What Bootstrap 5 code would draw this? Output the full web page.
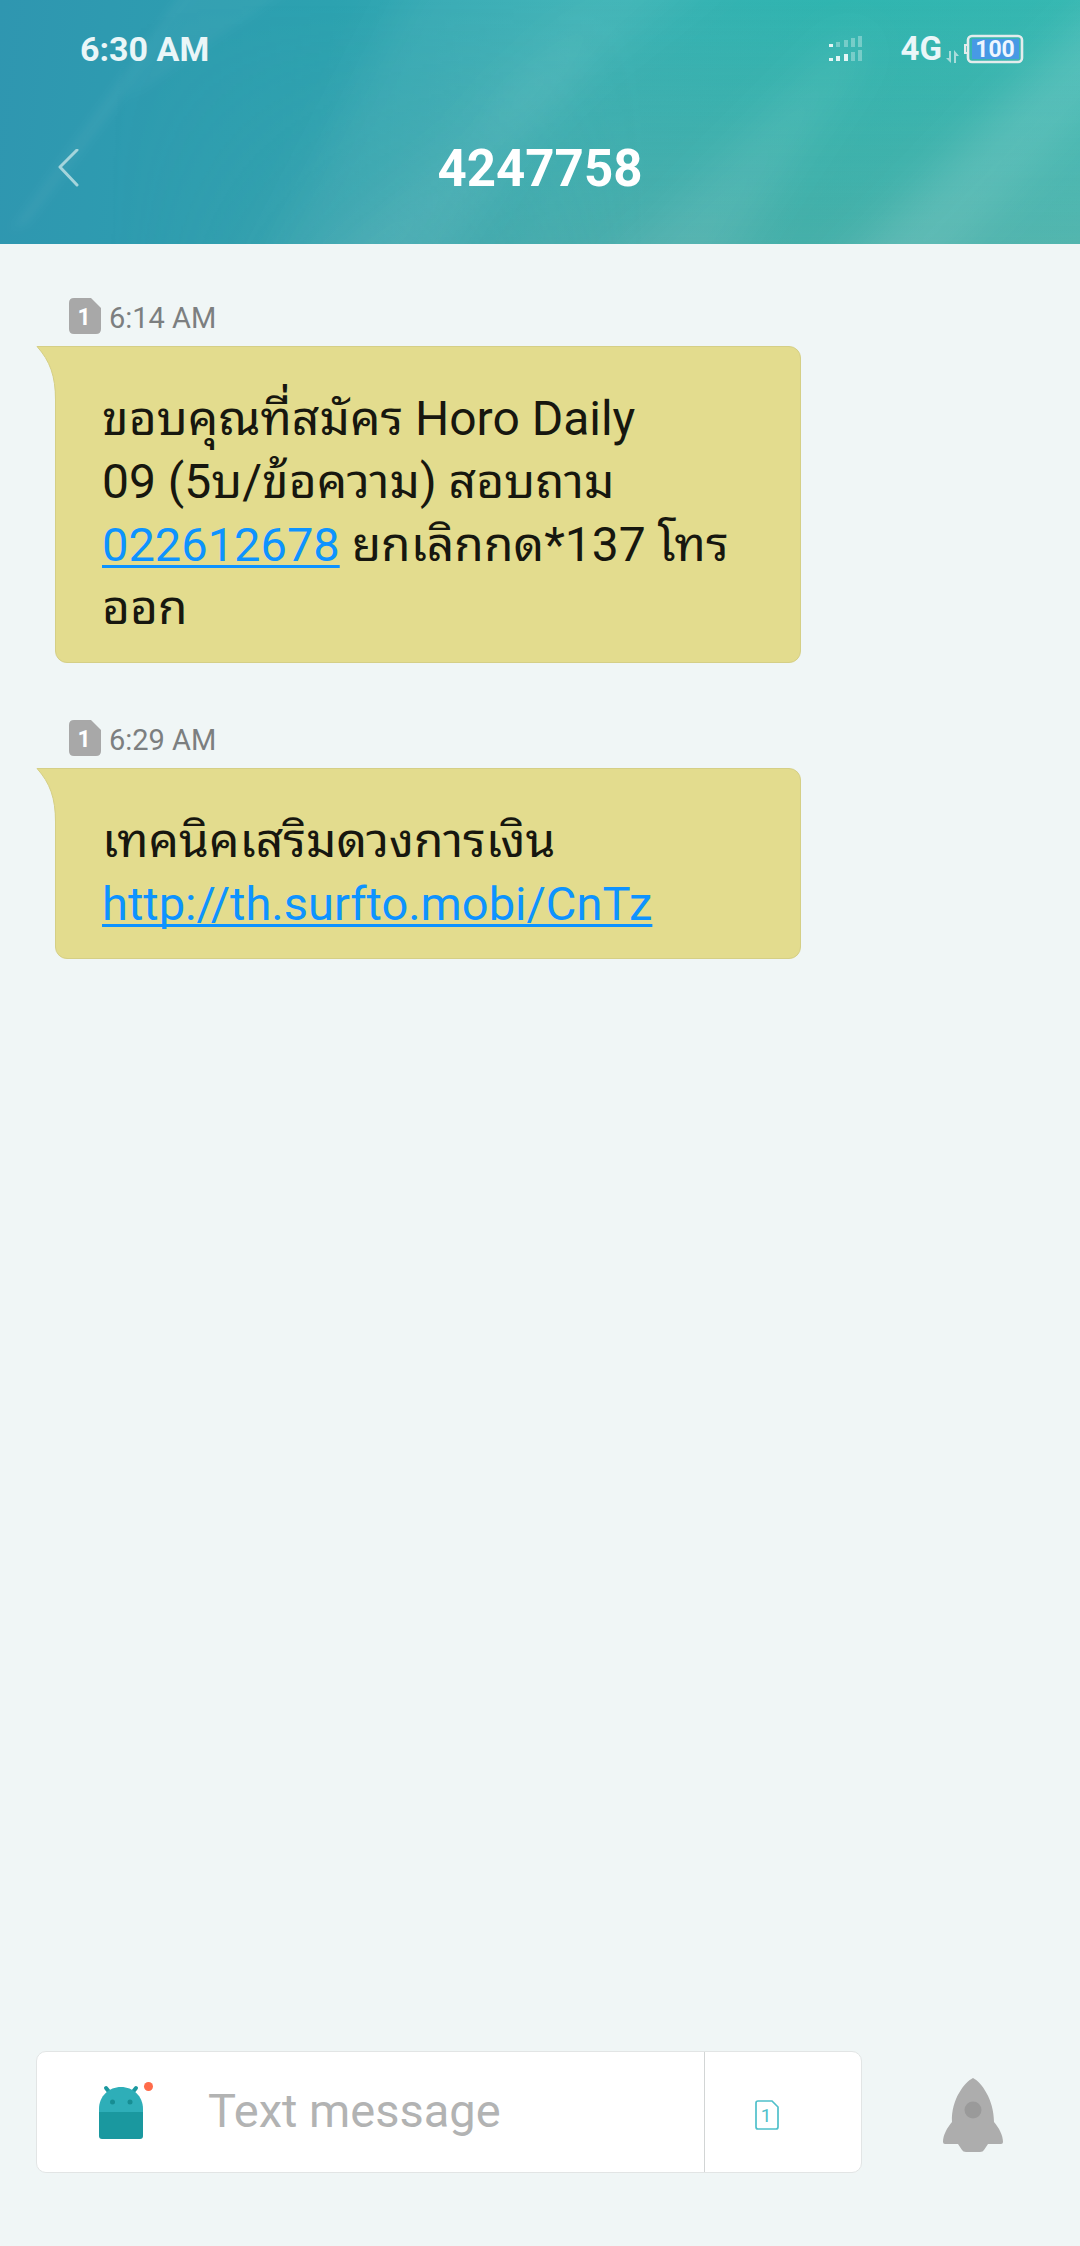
<!DOCTYPE html>
<html lang="th">
<head>
<meta charset="utf-8">
<meta name="viewport" content="width=device-width, initial-scale=1">
<title>4247758</title>
<link href="https://cdn.jsdelivr.net/npm/bootstrap@5.3.0/dist/css/bootstrap.min.css" rel="stylesheet">
<style>
  body { background: #f0f6f6; font-family: Roboto, "Noto Sans Thai Looped", "Noto Looped Thai", "Droid Sans Thai", Waree, Loma, Garuda, "Noto Sans Thai", sans-serif; color: #17170f; }
  .app-header { background: linear-gradient(97deg, #2f96b0 0%, #2ca2b0 30%, #38b0b4 52%, #30b5b0 75%, #36b8b2 100%); overflow: hidden; }
  .header-art { position: absolute; inset: 0; width: 100%; height: 100%; }
  .status-bar { height: 98px; padding: 0 56px 0 80px; color: #eaf6f8; }
  .status-time { font-size: 34px; font-weight: 700; }
  .status-net { font-size: 33px; font-weight: 700; margin-left: 38px; }
  .title-bar { height: 146px; padding: 0 50px 4px; }
  .title-side { width: 60px; height: 60px; }
  .title-text { font-size: 51px; font-weight: 700; line-height: 60px; }
  .thread { padding: 54px 55px; }
  .stamp { height: 48px; padding-left: 14px; gap: 8px; font-size: 29px; line-height: 40px; color: #7c7f80; }
  .bubble { max-width: 746px; margin-bottom: 57px; padding: 40px 24px 23px 46px; background: #e3dc8e; border: 1px solid #d5cf86; border-radius: 0 12px 12px 12px; font-size: 48px; line-height: 63px; }
  .bubble a { font-size: 47px; line-height: 60px; color: #0d93ff; text-decoration-thickness: 3px; text-underline-offset: 4px; text-decoration-skip-ink: none; }
  .bubble-tail { position: absolute; top: -1px; left: -20px; }
  .composer { padding: 0 36px 73px; }
  .compose-box { height: 122px; max-width: 826px; background: #fff; border: 1px solid #e2e5e5; border-radius: 10px; }
  .compose-box .form-control { border: 0; padding: 0 8px 2px 0; font-size: 47px; background: transparent; box-shadow: none; color: #17170f; }
  .compose-box .form-control::placeholder { color: #b2b3b3; }
  .emoji-btn { width: 171px; padding: 0 0 0 62px; }
  .sim-btn { width: 157px; padding: 6px 32px 0 0; border: 0; border-left: 1px solid #d2d5d5; }
  .send-btn { padding: 7px 0 0; margin-right: 40px; }
</style>
</head>
<body>
<div class="d-flex flex-column min-vh-100">
  <header class="app-header position-relative text-white">
    <svg class="header-art" viewBox="0 0 1080 244" preserveAspectRatio="none" aria-hidden="true">
      <defs>
        <filter id="soft" x="-30%" y="-30%" width="160%" height="160%"><feGaussianBlur stdDeviation="22"/></filter>
        <filter id="fine" x="-30%" y="-30%" width="160%" height="160%"><feGaussianBlur stdDeviation="5"/></filter>
        <linearGradient id="shade" x1="0" y1="0" x2="0" y2="1"><stop offset="0" stop-color="#84a096" stop-opacity="0"/><stop offset="1" stop-color="#84a096" stop-opacity=".26"/></linearGradient>
        <linearGradient id="fade"><stop offset=".1" stop-color="#000"/><stop offset=".6" stop-color="#fff"/></linearGradient>
        <mask id="side" maskUnits="userSpaceOnUse" x="0" y="0" width="1080" height="244"><rect width="1080" height="244" fill="url(#fade)"/></mask>
      </defs>
      <rect width="1080" height="244" fill="url(#shade)" mask="url(#side)"/>
      <g fill="#fff" filter="url(#soft)">
        <path d="M420-40H640L340 290H250Z" opacity=".05"/>
        <path d="M600 20L560 60L300 290H430Z" opacity=".08"/>
        <path d="M640-40H730L540 110L480 130Z" opacity=".07"/>
        <path d="M850 30L870 50L710 290H590Z" opacity=".08"/>
        <path d="M1110-10L1130 60L910 290H820Z" opacity=".12"/>
        <path d="M1120 40L1120 290H880Z" opacity=".05"/>
      </g>
      <g fill="#fff" filter="url(#fine)">
        <path d="M183-10H205L28 224L10 230Z" opacity=".04"/>
        <path d="M205-10H290L128 100Z" opacity=".03"/>
      </g>
    </svg>
    <div class="status-bar position-relative d-flex align-items-center">
      <span class="status-time me-auto">6:30 AM</span>
      <svg width="34" height="26" viewBox="0 0 34 26" fill="#e4f6f5" role="img" aria-label="Signal">
        <path d="M0 8h4v3H0zM0 22h4v3H0zM7 20h4v5H7zM15 18h4v7h-4z"/>
        <path opacity=".36" d="M7 6h4v5H7zM15 4h4v7h-4zM22 2h4v9h-4zM29 0h4v11h-4zM22 16h4v9h-4zM29 14h4v11h-4z"/>
      </svg>
      <span class="status-net">4G</span>
      <svg class="ms-1 mt-3" width="14" height="14" viewBox="0 0 14 14" fill="#a9dcda" aria-hidden="true"><path d="M3 1h2v12L0 8h3zM8 13h2V6h3L8 0z"/></svg>
      <svg class="ms-1" width="60" height="30" viewBox="0 0 60 30" role="img" aria-label="Battery 100">
        <path d="M4 11H1v8h3" fill="none" stroke="#e4ecec" stroke-width="2"/>
        <rect x="4" y="2" width="54" height="26" rx="4" fill="none" stroke="#e4ecec" stroke-width="2.6"/>
        <rect x="8" y="5" width="47" height="20" fill="#4799e5"/>
        <text x="31" y="23" text-anchor="middle" font-size="23" font-weight="700" fill="#eef6ff">100</text>
      </svg>
    </div>
    <div class="title-bar position-relative d-flex align-items-center justify-content-between">
      <button type="button" class="title-side btn border-0 p-0 text-start" aria-label="Back">
        <svg class="d-block ms-2" width="21" height="40" viewBox="0 0 21 40" fill="none" stroke="#a5d5dc" stroke-width="3" stroke-linecap="round" stroke-linejoin="round"><path d="M19 1L2 18L19 36"/></svg>
      </button>
      <h1 class="title-text m-0">4247758</h1>
      <span class="title-side"></span>
    </div>
  </header>

  <main class="thread flex-grow-1">
    <article>
      <div class="stamp d-flex align-items-start">
        <svg width="32" height="36" viewBox="0 0 32 36" role="img" aria-label="SIM 1"><path d="M5 0H22L32 10V31Q32 36 27 36H5Q0 36 0 31V5Q0 0 5 0Z" fill="#a8a8a8"/><text x="15" y="27" text-anchor="middle" font-size="23" font-weight="700" fill="#fff">1</text></svg>
        <time>6:14 AM</time>
      </div>
      <div class="bubble position-relative">
        <svg class="bubble-tail" width="22" height="54" viewBox="0 0 22 54" aria-hidden="true"><path d="M1 .5H22V54H19.500C19.500 30 14 15 1 .5Z" fill="#e3dc8e"/><path d="M22 .5H1C14 15 19.500 30 19.500 54" fill="none" stroke="#d5cf86"/></svg>
        ขอบคุณที่สมัคร Horo Daily<br>09 (5บ/ข้อความ) สอบถาม<br><a href="tel:022612678">022612678</a> ยกเลิกกด*137 โทร<br>ออก
      </div>
    </article>
    <article>
      <div class="stamp d-flex align-items-start">
        <svg width="32" height="36" viewBox="0 0 32 36" role="img" aria-label="SIM 1"><path d="M5 0H22L32 10V31Q32 36 27 36H5Q0 36 0 31V5Q0 0 5 0Z" fill="#a8a8a8"/><text x="15" y="27" text-anchor="middle" font-size="23" font-weight="700" fill="#fff">1</text></svg>
        <time>6:29 AM</time>
      </div>
      <div class="bubble position-relative">
        <svg class="bubble-tail" width="22" height="54" viewBox="0 0 22 54" aria-hidden="true"><path d="M1 .5H22V54H19.500C19.500 30 14 15 1 .5Z" fill="#e3dc8e"/><path d="M22 .5H1C14 15 19.500 30 19.500 54" fill="none" stroke="#d5cf86"/></svg>
        เทคนิคเสริมดวงการเงิน<br><a href="http://th.surfto.mobi/CnTz">http://th.surfto.mobi/CnTz</a>
      </div>
    </article>
  </main>

  <footer class="composer d-flex align-items-center justify-content-between">
    <form class="compose-box d-flex align-items-stretch flex-grow-1 overflow-hidden">
      <button type="button" class="emoji-btn btn border-0 text-start flex-shrink-0" aria-label="Attachments">
        <svg class="d-block" width="56" height="60" viewBox="0 0 56 60"><path d="M7 6l4 5M37 6l-4 5" stroke="#1a989f" stroke-width="4" stroke-linecap="round"/><path d="M0 31V27C0 14 10 5 22 5S44 14 44 27V31Z" fill="#2eaeb8"/><path d="M0 30H44V54Q44 57 41 57H3Q0 57 0 54Z" fill="#1a989f"/><circle cx="13.500" cy="20" r="2.500" fill="#178d93"/><circle cx="31" cy="20" r="2.500" fill="#178d93"/><circle cx="49.500" cy="4.500" r="4.500" fill="#ff6b4a"/></svg>
      </button>
      <input type="text" class="form-control" placeholder="Text message" aria-label="Text message">
      <button type="button" class="sim-btn btn rounded-0 flex-shrink-0" aria-label="SIM 1">
        <svg width="24" height="30" viewBox="0 0 24 30"><path d="M3 1H17L23 7V27Q23 29 21 29H3Q1 29 1 27V3Q1 1 3 1Z" fill="none" stroke="#4fc0ca" stroke-width="1.700"/><text x="11" y="22" text-anchor="middle" font-size="19" fill="#4fc0ca">1</text></svg>
      </button>
    </form>
    <button type="button" class="send-btn btn border-0" aria-label="Send">
      <svg class="d-block" width="62" height="75" viewBox="0 0 62 75"><path d="M31 0C39 4 52 21 52 44C57 50 61 57 61 64Q61 66 59 66H46L42 72Q41 74 38 74H24Q21 74 20 72L16 66H3Q1 66 1 64C1 57 5 50 10 44C9 21 23 4 31 0Z" fill="#adadad"/><circle cx="31" cy="32" r="8.500" fill="#9a9a9a"/></svg>
    </button>
  </footer>
</div>
<script src="https://cdn.jsdelivr.net/npm/bootstrap@5.3.0/dist/js/bootstrap.bundle.min.js"></script>
</body>
</html>
